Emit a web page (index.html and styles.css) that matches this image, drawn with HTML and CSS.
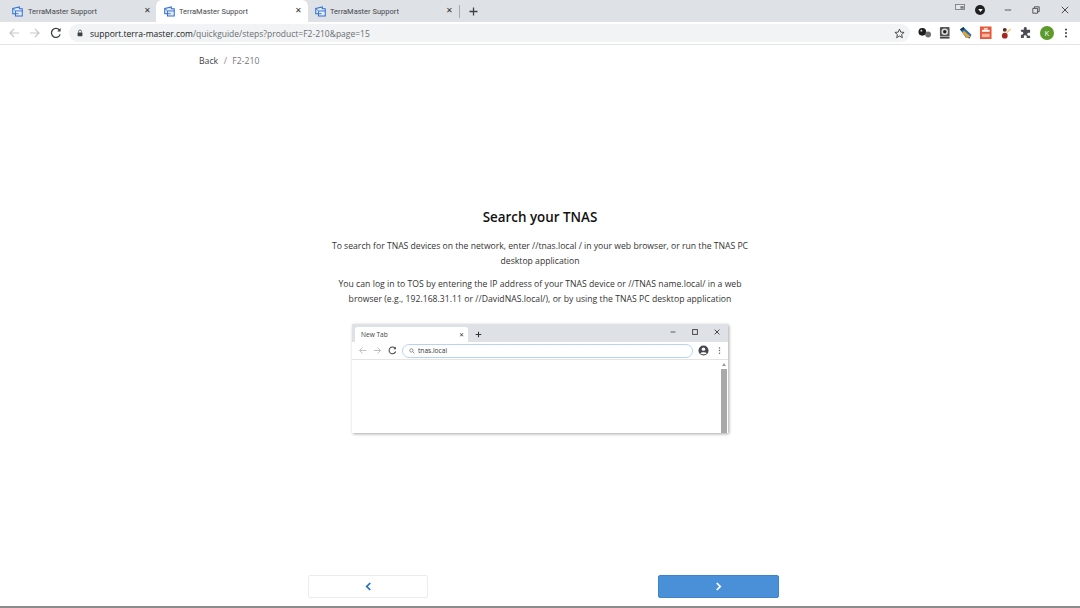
FILE: index.html
```html
<!DOCTYPE html>
<html lang="en">
<head>
<meta charset="utf-8">
<title>TerraMaster Support</title>
<link rel="stylesheet" href="styles.css">
</head>
<body>
<div class="window">
  <header class="tabstrip">
    <div class="tab first">
      <svg class="favicon" viewBox="0 0 12 12"><path d="M.8 2.600 8 1v2h3.200v7.800H3.800V8.400H.8z" fill="#e4ecf8" stroke="#2f6fd0" stroke-width="1.100"/><path d="M3.800 8.400V5.400h7.400M.8 2.600 3.800 5.400M3.800 8.400h3.400" fill="none" stroke="#2f6fd0" stroke-width="1"/></svg>
      <span class="tab-title">TerraMaster Support</span>
      <span class="tab-close">✕</span>
    </div>
    <div class="tab active">
      <svg class="favicon" viewBox="0 0 12 12"><path d="M.8 2.600 8 1v2h3.200v7.800H3.800V8.400H.8z" fill="#e4ecf8" stroke="#2f6fd0" stroke-width="1.100"/><path d="M3.800 8.400V5.400h7.400M.8 2.600 3.800 5.400M3.800 8.400h3.400" fill="none" stroke="#2f6fd0" stroke-width="1"/></svg>
      <span class="tab-title">TerraMaster Support</span>
      <span class="tab-close">✕</span>
    </div>
    <div class="tab last">
      <svg class="favicon" viewBox="0 0 12 12"><path d="M.8 2.600 8 1v2h3.200v7.800H3.800V8.400H.8z" fill="#e4ecf8" stroke="#2f6fd0" stroke-width="1.100"/><path d="M3.800 8.400V5.400h7.400M.8 2.600 3.800 5.400M3.800 8.400h3.400" fill="none" stroke="#2f6fd0" stroke-width="1"/></svg>
      <span class="tab-title">TerraMaster Support</span>
      <span class="tab-close">✕</span>
    </div>
    <span class="tab-sep"></span>
    <svg class="newtab" viewBox="0 0 10 10"><path d="M5 .5v9M.5 5h9" stroke="#3c4043" stroke-width="1.400"/></svg>
    <div class="win-controls">
      <svg class="cast" viewBox="0 0 12 7"><rect x=".5" y=".5" width="11" height="6" fill="#e6e8ea" stroke="#77797c"/><rect x="6.500" y="2.500" width="4" height="3" fill="#77797c"/></svg>
      <span class="dropdown-badge"><svg viewBox="0 0 6 4"><path d="M0 0h6L3 4z" fill="#fff"/></svg></span>
      <svg class="winbtn min" viewBox="0 0 10 10"><path d="M1 5h8" stroke="#555" stroke-width="1.200"/></svg>
      <svg class="winbtn max" viewBox="0 0 10 10"><path d="M3 2.500V1h6v6H7.500M1 3h6v6H1z" fill="none" stroke="#444" stroke-width="1.100"/></svg>
      <svg class="winbtn close" viewBox="0 0 10 10"><path d="M1 1l8 8M9 1l-8 8" stroke="#333" stroke-width="1.100"/></svg>
    </div>
  </header>

  <nav class="toolbar">
    <svg class="nav-ic" viewBox="0 0 12 12"><path d="M11 6H2M6 2 2 6l4 4" fill="none" stroke="#c4c7ca" stroke-width="1.200"/></svg>
    <svg class="nav-ic" viewBox="0 0 12 12"><path d="M1 6h9M6 2l4 4-4 4" fill="none" stroke="#c4c7ca" stroke-width="1.200"/></svg>
    <svg class="nav-ic reload" viewBox="0 0 12 12"><path d="M10.200 7.400A4.500 4.500 0 1 1 9.400 3" fill="none" stroke="#3c4043" stroke-width="1.300"/><path d="M10.600 1v3.400H7.200z" fill="#3c4043"/></svg>
    <div class="omnibox">
      <svg class="lock" viewBox="0 0 8 10"><path d="M2 4.500V3a2 2 0 0 1 4 0v1.500" fill="none" stroke="#3c4043"/><rect x=".8" y="4.200" width="6.400" height="5" rx=".6" fill="#3c4043"/></svg>
      <span class="url"><span class="host">support.terra-master.com</span>/quickguide/steps?product=F2-210&amp;page=15</span>
      <svg class="star" viewBox="0 0 12 12"><path d="M6 1.200 7.400 4.500 11 4.800 8.300 7.100 9.100 10.600 6 8.700 2.900 10.600 3.700 7.100 1 4.800 4.600 4.500z" fill="none" stroke="#3c4043" stroke-width="1"/></svg>
    </div>
    <div class="extensions">
      <svg class="ext" viewBox="0 0 14 14"><circle cx="4.500" cy="6" r="4" fill="#1d1d1d"/><circle cx="3.500" cy="4.800" r="1" fill="#ddd"/><circle cx="10.500" cy="8.800" r="3" fill="#6f6f6f"/></svg>
      <svg class="ext" viewBox="0 0 14 14"><rect x="2" y="1" width="10" height="10" rx="1" fill="#555"/><circle cx="7" cy="6" r="3.400" fill="#ddd"/><circle cx="7" cy="6" r="1.800" fill="#222"/><rect x="2" y="11.500" width="10" height="1.500" fill="#333"/></svg>
      <svg class="ext" viewBox="0 0 14 14"><path d="M1 3.500 4.500 1l8.500 8-2 4-4-1z" fill="#2b6ea8"/><path d="M5 5l7 6-3.500 1.500L3.500 7z" fill="#e8a530"/><path d="M1 3.500 4.500 1 6 3 2.500 5z" fill="#14385f"/></svg>
      <svg class="ext" viewBox="0 0 14 14"><rect x="1" y=".5" width="12" height="13" fill="#e8593a"/><rect x="3" y="4" width="8" height="2" fill="#fff"/><rect x="5" y="2" width="4" height="2" fill="#f9d6c9"/><rect x="3" y="8" width="8" height="3.500" fill="#f5b7a3"/></svg>
      <svg class="ext" viewBox="0 0 14 14"><circle cx="6" cy="10" r="3" fill="#a5281e"/><circle cx="6" cy="4" r="2" fill="#5a2a1c"/><path d="M8 7l4-4" stroke="#e9c46a" stroke-width="1.400"/></svg>
      <svg class="ext" viewBox="0 0 14 14"><path d="M5 2.500a1.500 1.500 0 0 1 3 0V4h3.500v3H10a1.500 1.500 0 0 0 0 3h1.500v2.500H8V11a1.500 1.500 0 0 0-3 0v1.500H2V9h1a1.500 1.500 0 0 0 0-3H2V4h3z" fill="#4a4d51"/></svg>
      <span class="avatar">K</span>
      <svg class="menu" viewBox="0 0 4 14"><circle cx="2" cy="3" r="1.200" fill="#3c4043"/><circle cx="2" cy="7" r="1.200" fill="#3c4043"/><circle cx="2" cy="11" r="1.200" fill="#3c4043"/></svg>
    </div>
  </nav>

  <main class="page">
    <div class="crumbs"><a class="crumb-link">Back</a><span class="crumb-sep">/</span><span class="crumb-current">F2-210</span></div>
    <section class="step">
      <h1 class="step-title">Search your TNAS</h1>
      <p class="step-text">To search for TNAS devices on the network, enter //tnas.local / in your web browser, or run the TNAS PC desktop application</p>
      <p class="step-text second">You can log in to TOS by entering the IP address of your TNAS device or //TNAS name.local/ in a web browser (e.g., 192.168.31.11 or //DavidNAS.local/), or by using the TNAS PC desktop application</p>
      <figure class="mock">
        <div class="mock-tabs">
          <div class="mock-tab"><span>New Tab</span><b class="mock-x">✕</b></div>
          <svg class="mock-plus" viewBox="0 0 10 10"><path d="M5 1v8M1 5h8" stroke="#333" stroke-width="1.500"/></svg>
          <div class="mock-win">
            <svg viewBox="0 0 10 10"><path d="M2 5h6" stroke="#555" stroke-width="1.200"/></svg>
            <svg viewBox="0 0 10 10"><rect x="2" y="2" width="6" height="6" fill="none" stroke="#444" stroke-width="1.200"/></svg>
            <svg viewBox="0 0 10 10"><path d="M2 2l6 6M8 2l-6 6" stroke="#444" stroke-width="1.200"/></svg>
          </div>
        </div>
        <div class="mock-toolbar">
          <svg class="mock-nav" viewBox="0 0 12 12"><path d="M11 6H2M6 2 2 6l4 4" fill="none" stroke="#b5b8bc" stroke-width="1.200"/></svg>
          <svg class="mock-nav" viewBox="0 0 12 12"><path d="M1 6h9M6 2l4 4-4 4" fill="none" stroke="#b5b8bc" stroke-width="1.200"/></svg>
          <svg class="mock-nav" viewBox="0 0 12 12"><path d="M10.200 7.400A4.500 4.500 0 1 1 9.400 3" fill="none" stroke="#444" stroke-width="1.400"/><path d="M10.600 1v3.400H7.200z" fill="#444"/></svg>
          <div class="mock-omni">
            <svg viewBox="0 0 10 10"><circle cx="4" cy="4" r="2.800" fill="none" stroke="#555"/><path d="M6 6l3 3" stroke="#555"/></svg>
            <span>tnas.local</span>
          </div>
          <svg class="mock-user" viewBox="0 0 12 12"><circle cx="6" cy="6" r="5.500" fill="#44484c"/><circle cx="6" cy="4.500" r="1.900" fill="#fff"/><path d="M2.600 9.200C3.400 7.600 8.600 7.600 9.400 9.200 8.400 10.400 3.600 10.400 2.600 9.200z" fill="#fff"/></svg>
          <svg class="mock-menu" viewBox="0 0 4 12"><circle cx="2" cy="2.500" r="1" fill="#666"/><circle cx="2" cy="6" r="1" fill="#666"/><circle cx="2" cy="9.500" r="1" fill="#666"/></svg>
        </div>
        <div class="mock-body">
          <div class="mock-scroll"><span class="mock-arrow"></span><span class="mock-thumb"></span></div>
        </div>
      </figure>
    </section>
    <div class="pager">
      <button class="pager-btn prev"><svg viewBox="0 0 8 10"><path d="M6 1 2 5l4 4" fill="none" stroke="#1f6fc0" stroke-width="2"/></svg></button>
      <button class="pager-btn next"><svg viewBox="0 0 8 10"><path d="M2 1l4 4-4 4" fill="none" stroke="#fff" stroke-width="2"/></svg></button>
    </div>
  </main>
  <div class="taskbar-edge"></div>
</div>
</body>
</html>
```
FILE: styles.css
```css
* { box-sizing: border-box; }
html, body { margin: 0; height: 100%; }
body { font-family: "Open Sans", "Noto Sans", sans-serif; background: #fff; color: #333; overflow: hidden; }
.window { display: flex; flex-direction: column; height: 608px; width: 1080px; }

.tabstrip { display: flex; align-items: center; height: 22px; background: #dee1e6; flex: none; }
.tab { display: flex; align-items: center; width: 152px; height: 22px; font-family: Roboto, sans-serif; font-size: 7.500px; color: #45484c; flex: none; }
.tab.first { width: 156px; padding: 0 3px 0 12px; }
.tab.active { background: #fff; border-radius: 6px 6px 0 0; padding: 0 4px 0 8px; }
.tab.last { width: 151px; padding: 0 4px 0 7px; }
.favicon { width: 11px; height: 11px; flex: none; margin-right: 5px; }
.tab.active .favicon { margin-right: 4px; }
.tab.last .favicon { margin-right: 4px; }
.tab-title { flex: 1; white-space: nowrap; }
.tab-close { font-size: 8px; color: #333; width: 12px; text-align: center; line-height: 1; }
.tab-sep { width: 1px; height: 13px; background: #a8abb0; flex: none; }
.newtab { width: 9px; height: 9px; margin-left: 9px; flex: none; }
.win-controls { display: flex; align-items: center; margin-left: auto; height: 22px; }
.cast { width: 10px; height: 6px; margin-right: 10px; margin-bottom: 9px; }
.dropdown-badge { display: flex; align-items: center; justify-content: center; width: 10px; height: 10px; border-radius: 50%; background: #222; margin-right: 19px; margin-top: -2px; }
.dropdown-badge svg { width: 5px; height: 3px; }
.winbtn { width: 8px; height: 8px; margin-top: -3px; }
.winbtn.min { margin-right: 20px; }
.winbtn.max { margin-right: 21px; }
.winbtn.close { margin-right: 11px; }

.toolbar { display: flex; align-items: center; height: 23px; background: #fff; border-bottom: 1px solid #e3e4e6; flex: none; padding-left: 8px; }
.nav-ic { width: 12px; height: 12px; margin-right: 9px; flex: none; }
.nav-ic.reload { margin-right: 7px; }
.omnibox { display: flex; align-items: center; width: 841px; height: 18px; background: #f1f3f4; border-radius: 9px; padding: 0 5px 0 8px; flex: none; }
.lock { width: 6px; height: 8px; margin-right: 7px; flex: none; }
.url { flex: 1; font-size: 8.500px; color: #6a6e72; white-space: nowrap; }
.host { color: #202124; }
.star { width: 11px; height: 11px; }
.extensions { display: flex; align-items: center; gap: 6.800px; margin-left: 8px; }
.ext { width: 13.500px; height: 13.500px; flex: none; }
.avatar { width: 14px; height: 14px; border-radius: 50%; background: #5c9a2c; color: #fff; font-size: 7.500px; text-align: center; line-height: 14px; flex: none; }
.menu { width: 4px; height: 12px; margin-left: 3px; }

.page { flex: 1; display: flex; flex-direction: column; min-height: 0; }
.crumbs { padding: 10px 0 0 199px; font-size: 8.700px; line-height: 13px; display: flex; }
.crumb-link { color: #444; }
.crumb-sep { color: #888; margin: 0 5.500px; }
.crumb-current { color: #777; }

.step { width: 426px; margin: 139px 0 0 327px; text-align: center; }
.step-title { margin: 0 0 12px; font-size: 13.400px; line-height: 20px; font-weight: 600; color: #111; }
.step-text { margin: 0 0 9px; font-size: 8.650px; line-height: 14.500px; color: #333; }
.step-text.second { letter-spacing: .03px; }

.mock { width: 376px; height: 109px; margin: 18px 0 0 25px; display: flex; flex-direction: column; box-shadow: 1px 1px 3px rgba(0,0,0,.35); text-align: left; background: #fff; }
.mock-tabs { display: flex; align-items: flex-end; height: 18px; background: #dee1e6; flex: none; }
.mock-tab { display: flex; align-items: center; justify-content: space-between; width: 113px; height: 15px; margin-left: 3px; padding: 0 4px 0 6px; background: #fff; border-radius: 3px 3px 0 0; font-size: 6.600px; color: #444; }
.mock-x { font-size: 6px; font-weight: 400; color: #333; }
.mock-plus { width: 7px; height: 7px; margin: 0 0 4px 7px; }
.mock-win { display: flex; gap: 14px; margin: 0 7px 6px auto; }
.mock-win svg { width: 8px; height: 8px; }
.mock-toolbar { display: flex; align-items: center; height: 18px; padding-left: 6px; border-bottom: 1px solid #e4e4e4; flex: none; }
.mock-nav { width: 9px; height: 9px; margin-right: 6px; flex: none; }
.mock-omni { display: flex; align-items: center; width: 291px; height: 14px; margin-left: -1px; border: 1px solid #b7d3f2; border-radius: 7px; padding-left: 6px; font-size: 6.600px; color: #333; flex: none; }
.mock-omni svg { width: 6px; height: 6px; margin-right: 3px; }
.mock-user { width: 11px; height: 11px; margin-left: 5px; }
.mock-menu { width: 3px; height: 9px; margin-left: 9px; }
.mock-body { flex: 1; display: flex; justify-content: flex-end; padding-right: 1px; }
.mock-scroll { width: 6px; display: flex; flex-direction: column; align-items: center; padding-top: 3px; }
.mock-arrow { width: 0; height: 0; border: 2px solid transparent; border-top: 0; border-bottom: 3px solid #999; margin-bottom: 3px; }
.mock-thumb { width: 6px; flex: 1; background: #a9a9a9; }

.pager { display: flex; justify-content: space-between; width: 471px; margin: auto 0 8px 308px; }
.pager-btn { display: flex; align-items: center; justify-content: center; width: 120px; height: 23px; padding: 0; border-radius: 2px; }
.pager-btn svg { width: 7px; height: 9px; }
.prev { background: #fff; border: 1px solid #ececec; }
.next { width: 121px; background: #4a90d9; border: 1px solid #3f83cc; }
.taskbar-edge { height: 2px; background: #8c8c8c; flex: none; }
```
